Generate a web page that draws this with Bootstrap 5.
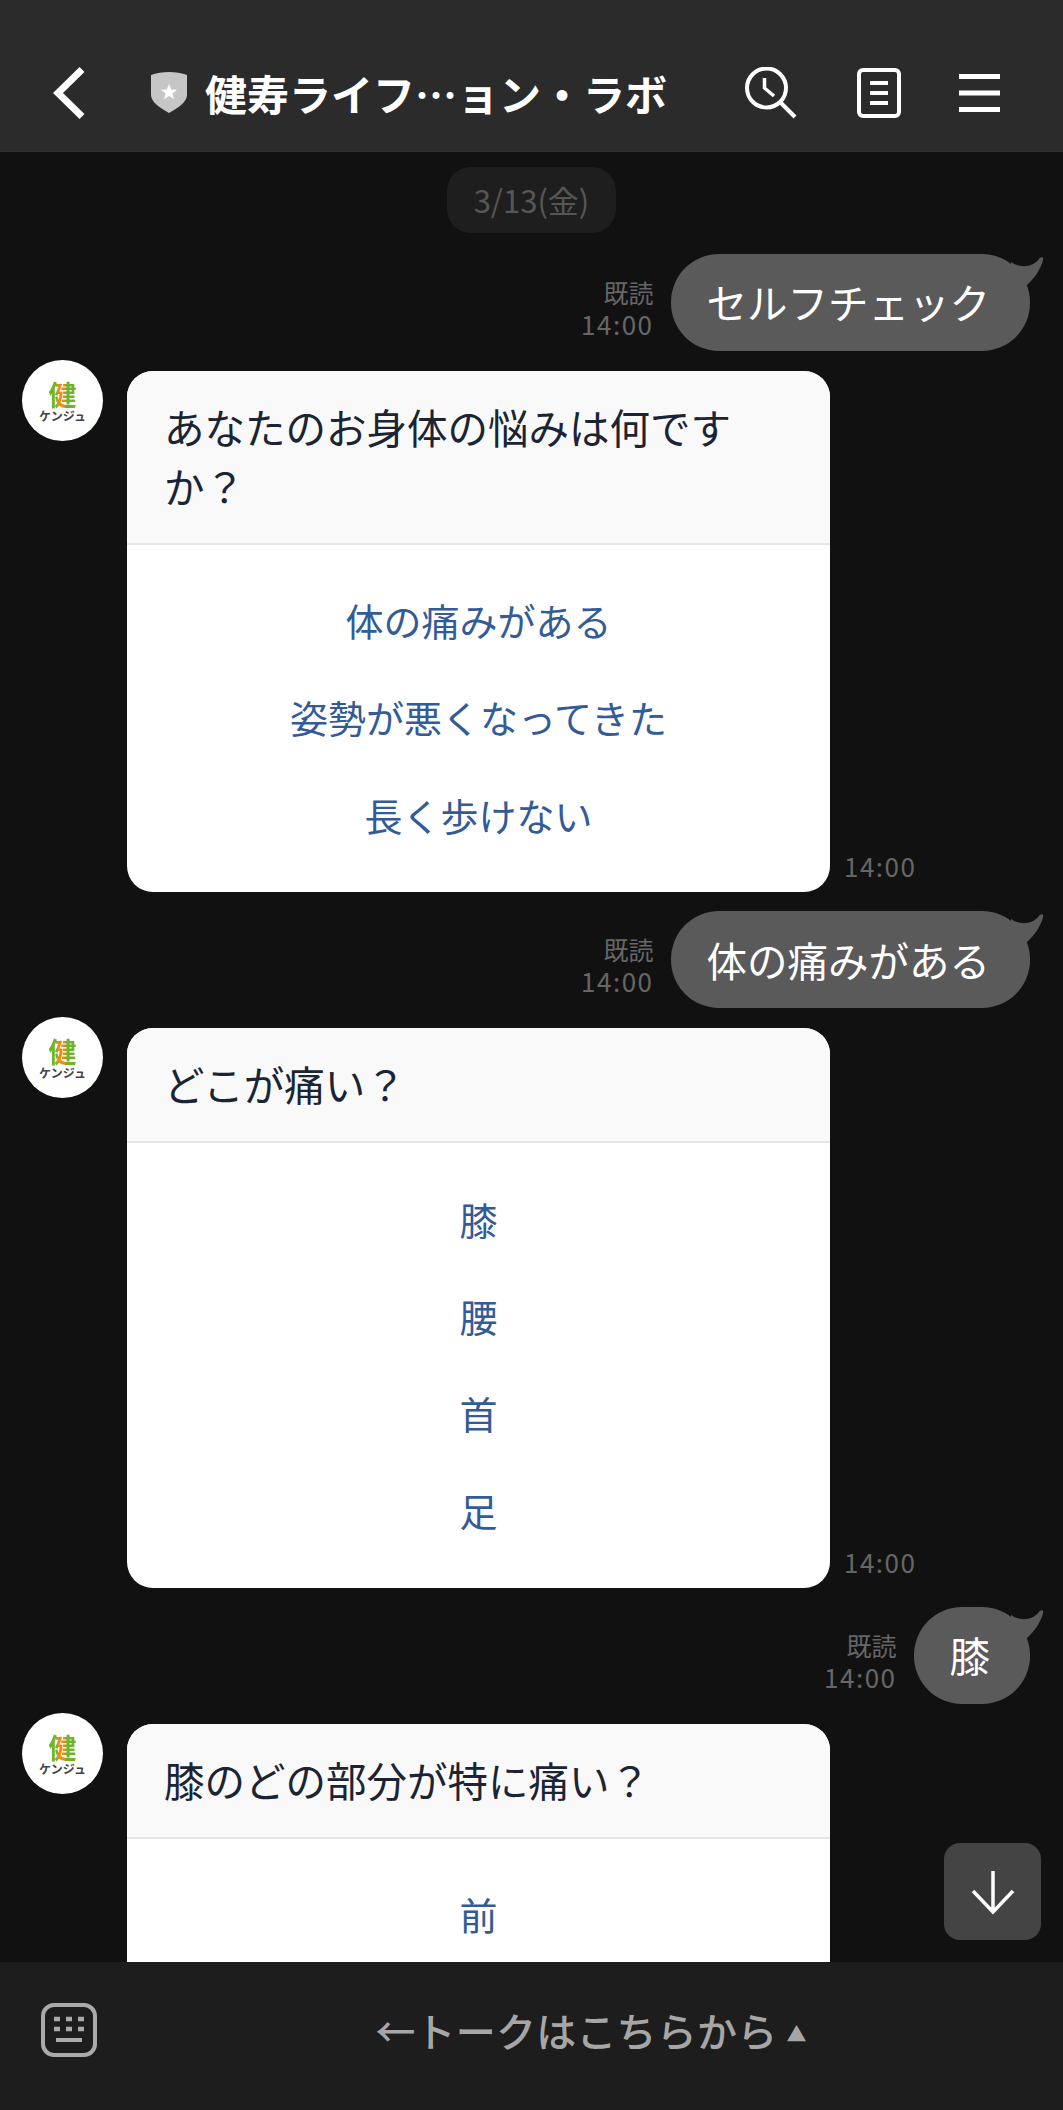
<!DOCTYPE html>
<html lang="ja">
<head>
    <meta charset="UTF-8">
    <meta name="viewport" content="width=device-width, initial-scale=1.0">
    <title>健寿ライフ…ョン・ラボ</title>
    <link href="https://cdn.jsdelivr.net/npm/bootstrap@5.3.2/dist/css/bootstrap.min.css" rel="stylesheet">
    <style>
        body {
            background: #111;
            font-family: "Noto Sans CJK JP", "Liberation Sans", sans-serif;
        }
        .talk-page { height: 100vh; }

        .talk-head {
            height: 152px;
            padding-top: 34px;
            background: #2b2b2b;
            border-bottom: 1px solid #313131;
            color: #fff;
        }
        .back-btn { margin-left: 53px; margin-right: 64px; }
        .head-title {
            width: 540px;
            margin-left: 18px;
            font-size: 42px;
            font-weight: 700;
            line-height: 1;
            white-space: nowrap;
        }
        .head-doc { margin-left: 60px; }
        .head-menu { margin-left: 58px; }

        .talk-main { background: #111; }
        .date-pill {
            width: 169px;
            height: 66px;
            margin-top: 15px;
            background: #1e1e1e;
            color: #565656;
            font-size: 31px;
            border-radius: 24px;
        }

        .me-row { padding-right: 33px; }
        .me-row-first { margin-top: 21px; }
        .me-row-next { margin-top: 19px; }
        .read-info {
            margin-right: 17px;
            margin-bottom: 11px;
            color: #666;
            font-size: 25px;
            line-height: 32px;
            text-align: right;
        }
        .talk-time { display: block; font-size: 26px; letter-spacing: 1.5px; }
        .me-bubble {
            height: 97px;
            padding: 0 40px 0 36px;
            background: #5a5a5a;
            color: #fff;
            font-size: 40.5px;
            border-radius: 48px;
        }
        .bubble-tail { position: absolute; top: 0; right: -14px; }

        .bot-row { margin-top: 7.5px; padding-left: 22px; }
        .bot-avatar {
            width: 81px;
            height: 81px;
            margin-top: 1px;
            margin-right: 24px;
            background: #fff;
            border-radius: 50%;
            flex-shrink: 0;
        }
        .logo-kanji {
            margin-top: 1px;
            font-size: 28px;
            font-weight: 700;
            line-height: 29px;
            background: linear-gradient(90deg, #6fb52c 0 32%, #f08a12 32% 58%, #6fb52c 58% 100%);
            -webkit-background-clip: text;
            background-clip: text;
            color: transparent;
        }
        .logo-kana {
            color: #444;
            font-size: 12px;
            font-weight: 700;
            line-height: 13px;
        }

        .bot-card {
            width: 703px;
            margin-top: 12px;
            border: 0;
            border-radius: 26px;
            overflow: hidden;
            flex-shrink: 0;
        }
        .bot-card-clipped { min-height: 320px; }
        .bot-card .card-header {
            padding: 26px 37px 28px;
            background: #f9f9fa;
            border-bottom: 2px solid #e6e6e6;
            border-radius: 0;
            color: #1a2433;
            font-size: 40.5px;
            line-height: 59px;
        }
        .bot-card .card-body { padding: 26.5px 0 29.5px; }
        .bot-option {
            height: 97.3px;
            color: #335b97;
            font-size: 38px;
            text-decoration: none;
        }
        .card-time {
            margin-left: 14px;
            margin-bottom: 10px;
            color: #666;
            line-height: 33px;
        }

        .scroll-down {
            position: absolute;
            right: 22px;
            bottom: 22px;
            width: 97px;
            height: 97px;
            background: #444;
            border: 0;
            border-radius: 16px;
        }

        .talk-foot {
            height: 148px;
            padding-bottom: 12px;
            background: #1d1d1d;
            color: #a6a6a6;
        }
        .foot-key { width: 119px; padding-left: 41px; }
        .foot-text { font-size: 40px; font-weight: 500; line-height: 1; letter-spacing: .2px; }
        .foot-caret { font-size: 20px; margin-left: 9px; vertical-align: 5px; }
    </style>
</head>
<body>
    <div class="talk-page d-flex flex-column">
        <header class="talk-head d-flex align-items-center flex-shrink-0">
            <svg class="back-btn" width="34" height="54" viewBox="0 0 34 54">
                <path d="M29 3.5 L5 27 L29 50.5" fill="none" stroke="#fff" stroke-width="7"/>
            </svg>
            <svg width="36" height="41" viewBox="0 0 36 41">
                <path d="M18 0 C24 0 31 1 36 3 V23 C36 30 27 36 18 41 C9 36 0 30 0 23 V3 C5 1 12 0 18 0 Z" fill="#c6c6c6"/>
                <path d="M18 12 L20.2 17.4 L26 17.8 L21.5 21.5 L23 27.2 L18 24 L13 27.2 L14.5 21.5 L10 17.8 L15.8 17.4 Z" fill="#fff"/>
            </svg>
            <div class="head-title">健寿ライフ…ョン・ラボ</div>
            <svg width="52" height="52" viewBox="0 0 52 52">
                <circle cx="21.5" cy="21" r="19.5" fill="none" stroke="#fff" stroke-width="4"/>
                <path d="M19.5 11 V21 L29 29" fill="none" stroke="#fff" stroke-width="3.5"/>
                <path d="M36 36 L50 50" fill="none" stroke="#fff" stroke-width="4"/>
            </svg>
            <svg class="head-doc" width="44" height="50" viewBox="0 0 44 50">
                <rect x="2" y="2" width="40" height="46" rx="4" fill="none" stroke="#fff" stroke-width="4"/>
                <path d="M13 15 H31 M13 25 H31 M13 35 H31" stroke="#fff" stroke-width="4"/>
            </svg>
            <svg class="head-menu" width="41" height="38" viewBox="0 0 41 38">
                <path d="M0 2.5 H41 M0 19 H41 M0 35.5 H41" stroke="#fff" stroke-width="5"/>
            </svg>
        </header>

        <main class="talk-main flex-grow-1 position-relative overflow-hidden">
            <div class="date-pill d-flex align-items-center justify-content-center mx-auto">3/13(金)</div>

            <div class="me-row me-row-first d-flex justify-content-end align-items-end">
                <div class="read-info">既読<span class="talk-time">14:00</span></div>
                <div class="me-bubble position-relative d-flex align-items-center">セルフチェック
                    <svg class="bubble-tail" width="33" height="32" viewBox="0 0 33 32"><path d="M0 8 C8 14 21 14 28 5 C29 3 33 2 32 6 C30 15 23 25 16 31 L0 31 Z" fill="#5a5a5a"/></svg>
                </div>
            </div>

            <div class="bot-row d-flex align-items-start">
                <div class="bot-avatar d-flex flex-column align-items-center justify-content-center">
                    <span class="logo-kanji">健</span><span class="logo-kana">ケンジュ</span>
                </div>
                <div class="card bot-card">
                    <div class="card-header">あなたのお身体の悩みは何ですか？</div>
                    <div class="card-body d-flex flex-column">
                        <a href="#" class="bot-option d-flex align-items-center justify-content-center">体の痛みがある</a>
                        <a href="#" class="bot-option d-flex align-items-center justify-content-center">姿勢が悪くなってきた</a>
                        <a href="#" class="bot-option d-flex align-items-center justify-content-center">長く歩けない</a>
                    </div>
                </div>
                <div class="card-time talk-time align-self-end">14:00</div>
            </div>

            <div class="me-row me-row-next d-flex justify-content-end align-items-end">
                <div class="read-info">既読<span class="talk-time">14:00</span></div>
                <div class="me-bubble position-relative d-flex align-items-center">体の痛みがある
                    <svg class="bubble-tail" width="33" height="32" viewBox="0 0 33 32"><path d="M0 8 C8 14 21 14 28 5 C29 3 33 2 32 6 C30 15 23 25 16 31 L0 31 Z" fill="#5a5a5a"/></svg>
                </div>
            </div>

            <div class="bot-row d-flex align-items-start">
                <div class="bot-avatar d-flex flex-column align-items-center justify-content-center">
                    <span class="logo-kanji">健</span><span class="logo-kana">ケンジュ</span>
                </div>
                <div class="card bot-card">
                    <div class="card-header">どこが痛い？</div>
                    <div class="card-body d-flex flex-column">
                        <a href="#" class="bot-option d-flex align-items-center justify-content-center">膝</a>
                        <a href="#" class="bot-option d-flex align-items-center justify-content-center">腰</a>
                        <a href="#" class="bot-option d-flex align-items-center justify-content-center">首</a>
                        <a href="#" class="bot-option d-flex align-items-center justify-content-center">足</a>
                    </div>
                </div>
                <div class="card-time talk-time align-self-end">14:00</div>
            </div>

            <div class="me-row me-row-next d-flex justify-content-end align-items-end">
                <div class="read-info">既読<span class="talk-time">14:00</span></div>
                <div class="me-bubble position-relative d-flex align-items-center">膝
                    <svg class="bubble-tail" width="33" height="32" viewBox="0 0 33 32"><path d="M0 8 C8 14 21 14 28 5 C29 3 33 2 32 6 C30 15 23 25 16 31 L0 31 Z" fill="#5a5a5a"/></svg>
                </div>
            </div>

            <div class="bot-row d-flex align-items-start">
                <div class="bot-avatar d-flex flex-column align-items-center justify-content-center">
                    <span class="logo-kanji">健</span><span class="logo-kana">ケンジュ</span>
                </div>
                <div class="card bot-card bot-card-clipped">
                    <div class="card-header">膝のどの部分が特に痛い？</div>
                    <div class="card-body d-flex flex-column">
                        <a href="#" class="bot-option d-flex align-items-center justify-content-center">前</a>
                    </div>
                </div>
            </div>

            <button class="scroll-down btn d-flex align-items-center justify-content-center p-0">
                <svg width="46" height="46" viewBox="0 0 46 46">
                    <path d="M23 2 V42 M3 22 L23 43 L43 22" fill="none" stroke="#fff" stroke-width="3.5"/>
                </svg>
            </button>
        </main>

        <footer class="talk-foot d-flex align-items-center flex-shrink-0">
            <div class="foot-key">
                <svg class="d-block" width="56" height="54" viewBox="0 0 56 54">
                    <rect x="2" y="2" width="52" height="50" rx="11" fill="none" stroke="#aaa" stroke-width="4"/>
                    <path d="M13 16 H19 M25 16 H31 M37 16 H43 M13 26 H19 M25 26 H31 M37 26 H43" stroke="#aaa" stroke-width="4.5"/>
                    <path d="M15 37 H41" stroke="#aaa" stroke-width="4"/>
                </svg>
            </div>
            <div class="foot-text flex-grow-1 text-center">←トークはこちらから<span class="foot-caret">▲</span></div>
        </footer>
    </div>

    <script src="https://cdn.jsdelivr.net/npm/bootstrap@5.3.2/dist/js/bootstrap.bundle.min.js"></script>
</body>
</html>
